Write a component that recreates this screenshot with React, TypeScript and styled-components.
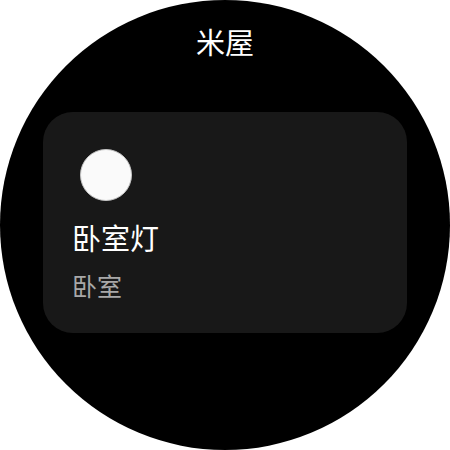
import React from "react";
import styled, { createGlobalStyle } from "styled-components";

const Global = createGlobalStyle`
  html, body { margin: 0; padding: 0; background: #ffffff; }
  body { font-family: "Noto Sans CJK SC", "Noto Sans", sans-serif; }
`;

const Watch = styled.div`
  width: 450px;
  height: 450px;
  border-radius: 50%;
  background: #000000;
  display: flex;
  flex-direction: column;
  align-items: center;
  overflow: hidden;
`;

const Title = styled.div`
  margin-top: 27px;
  font-size: 29px;
  line-height: 1;
  color: #ffffff;
  height: 30px;
`;

const Card = styled.div`
  margin-top: 55px;
  width: 364px;
  height: 221px;
  box-sizing: border-box;
  border-radius: 30px;
  background: #181818;
  display: flex;
  flex-direction: column;
  padding: 37px 0 0 29px;
`;

const Lamp = styled.div`
  margin-left: 8px;
  width: 52px;
  height: 52px;
  box-sizing: border-box;
  border-radius: 50%;
  background: #fafafa;
  border: 1.5px solid #c4c4c4;
`;

const Name = styled.div`
  margin-top: 22px;
  font-size: 29px;
  line-height: 1;
  color: #ffffff;
`;

const Room = styled.div`
  margin-top: 21px;
  font-size: 25px;
  line-height: 1;
  color: #a8a8a8;
`;

export default function App() {
  return (
    <>
      <Global />
      <Watch>
        <Title>米屋</Title>
        <Card>
          <Lamp />
          <Name>卧室灯</Name>
          <Room>卧室</Room>
        </Card>
      </Watch>
    </>
  );
}
